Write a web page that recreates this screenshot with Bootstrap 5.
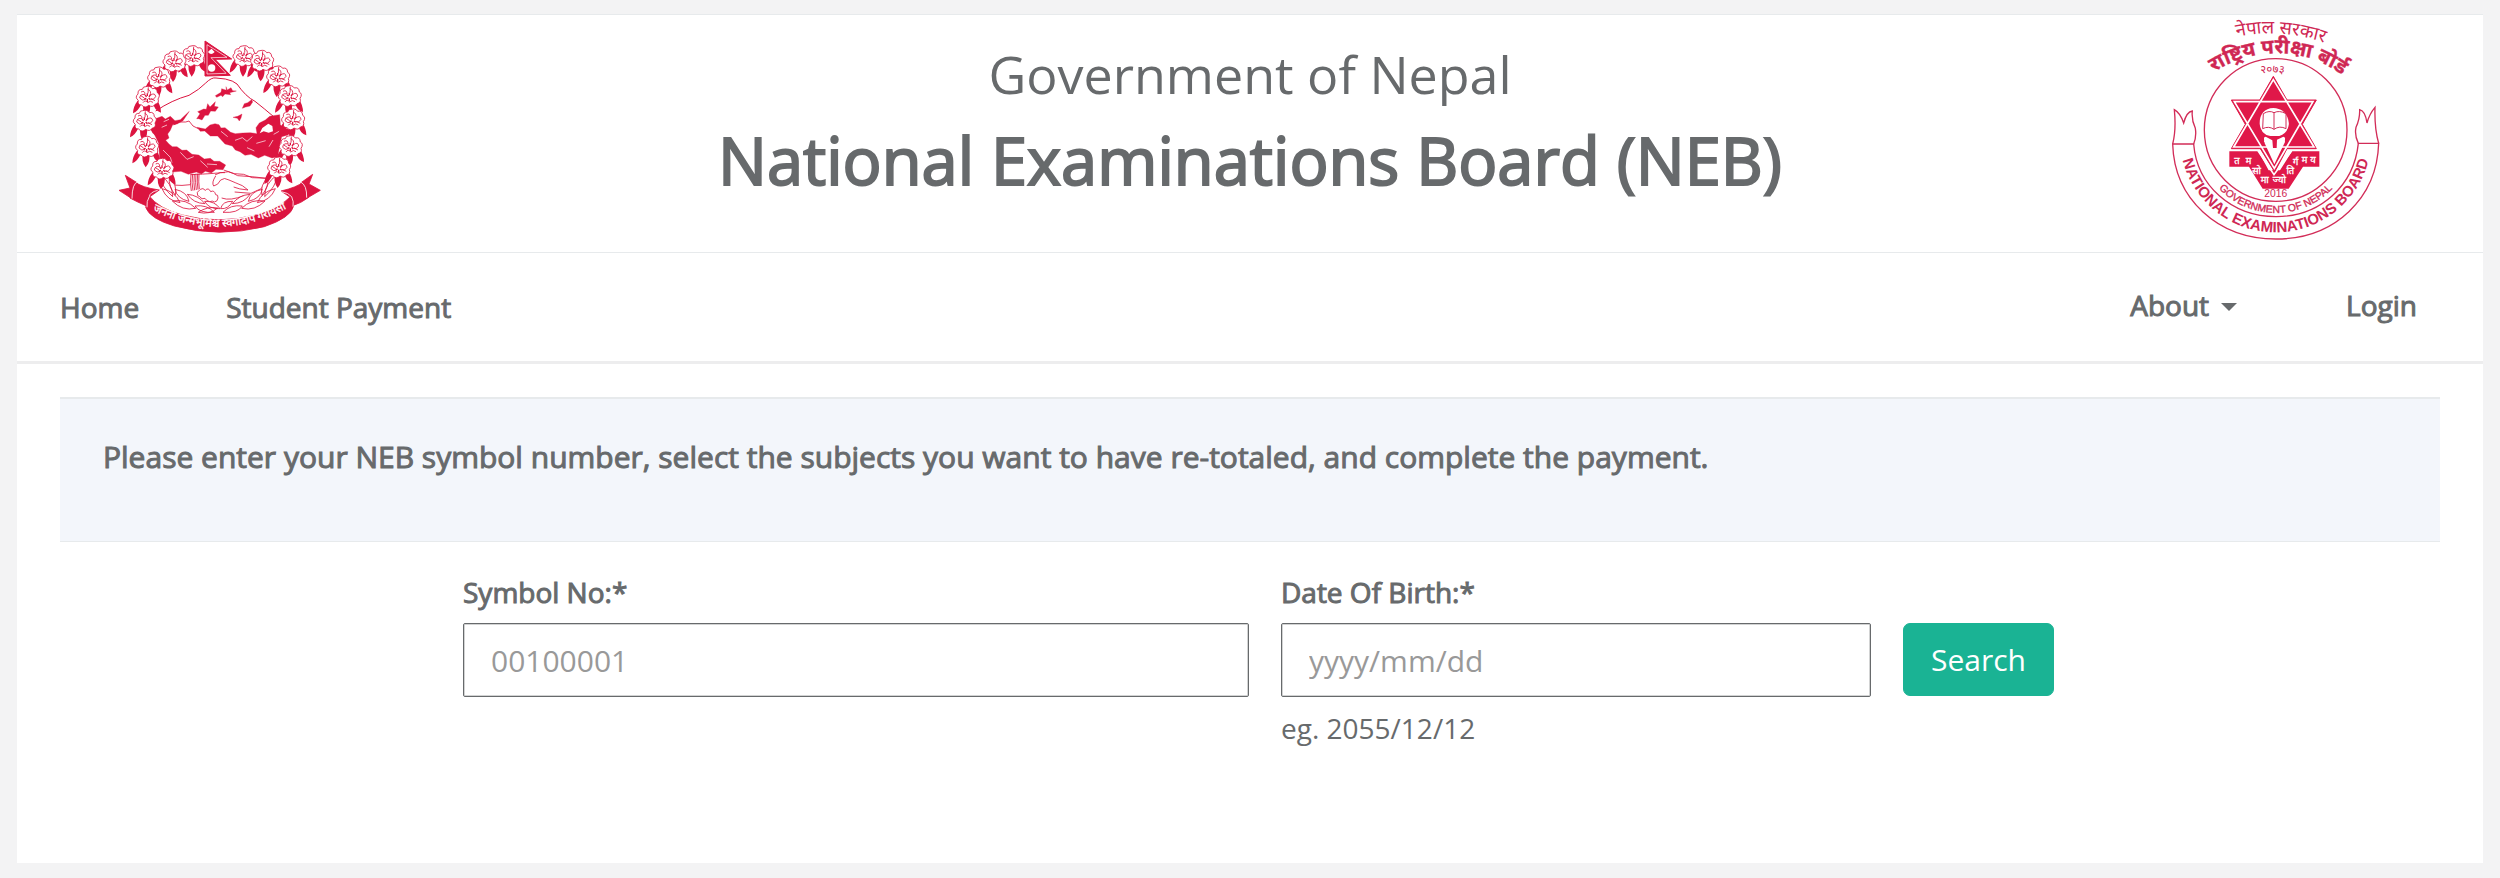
<!DOCTYPE html>
<html lang="en">
<head>
<meta charset="utf-8">
<meta name="viewport" content="width=device-width, initial-scale=1">
<title>National Examinations Board (NEB)</title>
<link href="https://cdn.jsdelivr.net/npm/bootstrap@5.3.0/dist/css/bootstrap.min.css" rel="stylesheet">
<style>
  :root { --ink: #676a6c; --rule: #e7eaec; }
  body { background: #f3f3f4; color: var(--ink); font-family: "Open Sans", sans-serif; font-size: 28px; line-height: 40px; padding: 14px 17px 15px; }
  .sheet { background: #fff; border-top: 1px solid var(--rule); }
  .masthead { border-bottom: 1px solid var(--rule); }
  .masthead svg { display: block; margin-top: -1px; }
  .crest-left { padding-left: 90px; }
  .crest-right { padding-right: 98px; }
  .titles { padding-top: 29px; }
  .gov { font-size: 52px; line-height: 60px; margin-bottom: 16px; }
  .board { font-size: 65px; line-height: 80px; font-weight: 400; -webkit-text-stroke: 2px currentColor; }
  .heavy { -webkit-text-stroke: 1px currentColor; }
  .mainnav { padding: 32px 66px 32px 43px; border-bottom: 3px solid #ededee; }
  .mainnav a { color: var(--ink); text-decoration: none; }
  .gap-left { gap: 87px; }
  .gap-right { gap: 109px; }
  .mainnav .dropdown-toggle::after { border-top-width: 8px; border-right-width: 8px; border-left-width: 8px; margin-left: 12px; vertical-align: 5px; }
  .notice { margin: 33px 43px 0; padding: 36px 43px 62px; background: #f3f6fb; border-top: 2px solid var(--rule); border-bottom: 1px solid var(--rule); font-size: 30px; line-height: 44px; }
  .lookup { display: grid; grid-template-columns: 414fr 786fr 590fr 580fr; column-gap: 32px; padding-top: 30px; }
  .lookup label { display: block; margin-bottom: 11px; }
  .lookup .form-control { height: 74px; padding: 0 27px; font-size: 30px; color: var(--ink); border: 1px solid var(--ink); border-radius: 2px; box-shadow: inset 0 0 0 1px #d2d3d3; }
  .lookup .form-control::placeholder { color: #999; }
  .hint { margin-top: 11px; }
  .btn-find { --bs-btn-bg: #1ab394; --bs-btn-color: #fff; --bs-btn-border-color: #1ab394; --bs-btn-hover-bg: #18a689; --bs-btn-hover-color: #fff; font-size: 30px; line-height: 40px; height: 73px; padding: 0 27px; margin-top: 51px; border-radius: 7px; }
  svg text { font-family: "Noto Sans Devanagari", "Lohit Devanagari", "Liberation Sans", sans-serif; }
  svg .latin { font-family: "Liberation Sans", sans-serif; }
  svg .latin-narrow { font-family: "Liberation Sans Narrow", "Liberation Sans", sans-serif; }
</style>
</head>
<body class="d-flex flex-column min-vh-100">
<div class="sheet flex-grow-1">
  <header class="masthead row g-0">
    <div class="col-2 crest-left">
      <svg width="231" height="238" viewBox="50 42 693 714" role="img" aria-label="Emblem of Nepal" fill="none" stroke="#dc1440" stroke-width="2.5" stroke-linejoin="round">
        <defs>
          <g id="bloom">
            <path fill="#dc1440" stroke="none" d="M-30 8 Q-44 26-44 46Q-28 40-18 16ZM-12 14Q-18 40-4 58Q12 40 6 14ZM16 14Q20 38 40 44Q40 24 28 6Z"/>
            <path fill="#fff" d="M-6-34Q8-38 14-28Q28-32 29-16Q40-10 31 3Q36 16 22 19Q16 30 3 22Q-8 33-18 21Q-32 21-28 7Q-40-2-29-12Q-30-27-16-26Q-14-35-6-34Z"/>
            <path d="M-20-18Q-8-24-8-10Q-22-14-24 0Q-16 10-6 4M0-26Q12-22 8-8Q22-18 24-4Q18 8 8 3M-14 14Q-8 4 0 14Q8 6 16 13M-22-8L-10 0M22 8L10 2M2-32L1-14"/>
            <path stroke-width="4" d="M-8-8L-3-4M8-10L4-3M-10 3L-4 1M8 5L3 0M-1 12V3M-1-14V-6"/>
          </g>
          <path id="motto" d="M170 622Q385 742 606 616"/>
        </defs>
        <!-- flag -->
        <path fill="#dc1440" stroke-width="3" d="M344 123L424 177L374 178L420 226L344 228Z"/>
        <path stroke="#fff" stroke-width="2" d="M350 134L410 172L362 173L407 220L350 222Z"/>
        <path fill="#fff" stroke="none" d="M353 156Q362 168 373 156L369 152L364 146L358 151Z"/>
        <circle cx="364" cy="204" r="11" fill="#fff" stroke="none"/>
        <!-- mountain -->
        <path stroke-width="3" d="M196 333Q245 300 296 286Q328 268 345 250Q364 231 377 234L405 237Q429 242 440 252Q466 290 494 304Q522 326 550 350"/>
        <g fill="#dc1440" stroke-width="1">
          <path d="M375 287L392 277L394 266L408 271L407 260L411 270L422 263L427 272L438 273L418 278L421 284L404 282L397 290L392 286L379 292Z"/>
          <path d="M319 356L329 341L322 335L340 327L348 328L352 311L359 321L375 305L372 319L384 321L375 334L361 333L354 346L344 346L335 360L325 356Z"/>
          <path d="M456 325L462 311L472 308L484 299L487 306L479 318L466 321Z"/>
          <path d="M428 352L442 349L455 342L452 354L447 363L441 355Z"/>
          <path d="M193 357L215 349L225 357L240 349L254 362L270 359L297 334L278 362L260 372L247 374L240 391L232 402L236 414L226 421L236 432L246 440L260 440L275 451L289 450L305 463L325 465L342 477L360 475L371 484L388 484L406 495L398 509L377 508L363 519L345 514L333 522L318 516L294 523L272 514L245 516L225 506L208 480L205 430L193 405Z"/>
          <path d="M320 382L345 387L359 375L374 371L386 374L392 384L404 383L421 397L435 401L457 399L480 398L500 401L497 383L507 369L525 360L538 349L568 344L570 374L576 380L604 392L593 405L574 410L569 433L562 470L545 474L523 466L504 474L482 463L464 466L449 455L435 450L426 438L404 432L382 408L360 408L343 393L330 394Z"/>
        </g>
        <path fill="#fff" stroke="none" d="M516 384L534 371L546 378L548 394L535 398L520 394L508 400Z"/>
        <path stroke="#fff" stroke-width="2" d="M220 365L236 358M214 382L230 375M270 457L290 478L310 470M330 482L352 502M380 494L350 492M434 421L456 413L470 424L486 410M498 430L526 422M536 440L548 420M470 443L492 453M550 403L568 393M218 450L240 472L245 488M392 394L412 410"/>
        <path d="M250 375L266 366L286 366L296 363L308 378L324 386M400 510L432 521L460 523L486 533L536 535"/>
        <!-- hands -->
        <path d="M300 524C350 522 394 519 414 515Q432 521 442 527Q494 530 536 536M244 555Q278 558 300 554M321 577L330 568Q338 562 345 571Q354 561 361 575Q372 569 376 584Q384 583 383 594Q382 605 372 606Q366 601 359 605Q349 604 344 595Q334 600 328 590Q319 589 321 577M376 528Q363 548 370 558Q383 556 391 540Q402 531 416 540Q437 549 456 557L473 570Q445 568 430 561M433 576L482 580Q513 570 532 548M394 594Q420 604 462 586M374 525Q390 514 404 518"/>
        <path d="M302 523Q298 549 303 573M307 522Q303 549 308 572M312 522Q309 549 313 571M317 521Q314 549 318 570M322 521Q319 547 323 569M326 521Q324 547 327 567"/>
        <!-- laurel -->
        <g fill="#fff">
          <path d="M209 524Q212 560 247 590Q247 551 209 524ZM237 532Q234 558 255 586Q262 556 237 532ZM215 566Q230 602 269 608Q254 574 215 566ZM254 568Q260 596 296 604Q290 575 254 568ZM246 603Q276 634 316 625Q288 596 246 603ZM291 583Q309 610 344 611Q323 585 291 583ZM314 618Q327 640 372 637Q350 613 314 618ZM343 604Q356 628 389 626Q374 603 343 604ZM382 624Q350 618 324 637Q358 645 382 624Z"/>
          <path d="M561 524Q558 560 523 590Q523 551 561 524ZM533 532Q536 558 515 586Q508 556 533 532ZM555 566Q540 602 501 608Q516 574 555 566ZM516 568Q510 596 474 604Q480 575 516 568ZM524 603Q494 634 454 625Q482 596 524 603ZM479 583Q461 610 426 611Q447 585 479 583ZM456 618Q443 640 398 637Q420 613 456 618ZM427 604Q414 628 391 626Q396 603 427 604Z"/>
        </g>
        <use href="#bloom" x="462" y="172"/><use href="#bloom" x="308" y="172"/>
        <use href="#bloom" x="252" y="188"/><use href="#bloom" x="515" y="186"/>
        <use href="#bloom" x="206" y="236"/><use href="#bloom" x="563" y="233"/>
        <use href="#bloom" x="172" y="294"/><use href="#bloom" x="598" y="292"/>
        <use href="#bloom" x="163" y="366"/><use href="#bloom" x="608" y="362"/>
        <use href="#bloom" x="170" y="444"/><use href="#bloom" x="601" y="442"/>
        <use href="#bloom" x="216" y="510"/><use href="#bloom" x="566" y="506"/>
        <!-- ribbon -->
        <g fill="#dc1440">
          <path d="M105 526L140 548L126 597L86 571L119 564Z"/>
          <path d="M135 546Q152 562 207 570L176 592L167 617Q140 606 119 594Z"/>
          <path d="M667 523L656 552L690 571L647 596L632 548Z"/>
          <path d="M638 546Q620 562 572 573L600 592L606 617Q632 610 655 592Z"/>
          <path d="M176 587Q205 626 276 645Q385 674 496 645Q568 624 604 587L610 618Q602 653 522 680Q385 714 252 678Q178 656 166 622Z"/>
        </g>
        <path stroke="#fff" d="M143 545Q125 550 125 596M177 590Q168 603 170 622M202 571Q178 577 177 590M573 575Q594 578 604 590Q611 605 608 620M631 546Q650 555 649 593"/>
        <text fill="#fff" stroke="#fff" stroke-width="1" font-size="33"><textPath href="#motto" startOffset="50%" text-anchor="middle">जननी जन्मभूमिश्च स्वर्गादपि गरीयसी</textPath></text>
      </svg>
    </div>
    <div class="col-8 titles text-center">
      <p class="gov">Government of Nepal</p>
      <h1 class="board mb-0">National Examinations Board (NEB)</h1>
    </div>
    <div class="col-2 crest-right d-flex justify-content-end">
      <svg class="flex-shrink-0" width="216" height="238" viewBox="87 42 648 714" role="img" aria-label="National Examinations Board seal" fill="none" stroke="#d22c58" stroke-width="4">
        <defs>
          <path id="arcTop" d="M262 118Q415 74 580 138"/>
          <path id="arcBoard" d="M190 238Q295 160 410 160Q530 158 636 248"/>
          <path id="arcYear" d="M355 222Q400 215 440 222"/>
          <path id="arcGov" d="M223 550A235 235 0 0 0 591 550"/>
          <path id="arcName" d="M119 409A288 288 0 0 0 695 409"/>
        </defs>
        <circle cx="407" cy="390" r="214"/>
        <path d="M98 432H161C171 556 274 650 408 650C542 650 642 556 655 430H716C711 594 585 717 408 717C232 717 103 596 98 432Z"/>
        <path d="M98 432Q109 390 103 329Q121 339 131 369Q140 335 157 333Q154 360 166 385Q170 410 161 432M716 430Q703 385 705 322Q688 342 681 369Q676 333 659 329Q660 357 648 382Q643 406 655 430"/>
        <!-- star -->
        <path fill="#e01849" stroke="#e01849" stroke-width="3" d="M400 229L441 300H529L487 373L529 446H441L404 516L361 446H274L316 373L274 300H359Z"/>
        <path stroke="#fff" stroke-width="5" d="M400 239L522 441H281ZM283 305H519L403 505Z"/>
        <path fill="#fff" stroke="none" d="M400 324C432 325 448 348 447 382Q433 404 435 426L403 493L372 425Q374 404 360 382C355 348 370 325 400 324Z"/>
        <path fill="#e01849" stroke="none" d="M359 372Q361 403 391 408H418Q443 401 447 372Q460 413 435 432Q441 412 430 410L411 419L410 444H399L397 421L377 410Q366 412 374 430Q345 406 359 372Z"/>
        <path fill="#fff" stroke-width="3" d="M370 341Q388 330 402 338Q418 330 438 341V386Q419 376 402 388Q386 377 368 386ZM402 338V388"/>
        <!-- banner -->
        <path fill="#e01849" stroke="none" d="M268 454H355L386 511H420L456 454H538V500H489L446 566H368L327 500H268Z"/>
        <path stroke="#fff" stroke-width="5" d="M354 452L402 524L455 452"/>
        <text fill="#fff" stroke="#fff" stroke-width="1" font-size="28" text-anchor="middle"><tspan x="291" y="493">त</tspan><tspan x="326" y="493">म</tspan><tspan x="350" y="522">सो</tspan><tspan x="374" y="549">मा</tspan><tspan x="418" y="549">ज्यो</tspan><tspan x="451" y="521">ति</tspan><tspan x="467" y="495">र्ग</tspan><tspan x="494" y="489">म</tspan><tspan x="519" y="489">य</tspan></text>
        <g fill="#cf2754" stroke-width="1">
          <text font-size="55" stroke="none"><textPath href="#arcTop" startOffset="50%" text-anchor="middle">नेपाल सरकार</textPath></text>
          <text font-size="61" font-weight="700"><textPath href="#arcBoard" startOffset="50%" text-anchor="middle">राष्ट्रिय परीक्षा बोर्ड</textPath></text>
          <text font-size="34" stroke="none"><textPath href="#arcYear" startOffset="50%" text-anchor="middle">२०७३</textPath></text>
          <text class="latin" x="407" y="591" font-size="31" stroke="none" text-anchor="middle">2016</text>
          <text class="latin-narrow" font-size="31"><textPath href="#arcGov" startOffset="50%" text-anchor="middle">GOVERNMENT OF NEPAL</textPath></text>
          <text class="latin" font-size="45" font-weight="700" stroke="none"><textPath href="#arcName" startOffset="50%" text-anchor="middle">NATIONAL EXAMINATIONS BOARD</textPath></text>
        </g>
      </svg>
    </div>
  </header>

  <nav class="mainnav d-flex justify-content-between align-items-center" aria-label="Main">
    <ul class="list-unstyled d-flex mb-0 gap-left heavy">
      <li><a href="#">Home</a></li>
      <li><a href="#">Student Payment</a></li>
    </ul>
    <ul class="list-unstyled d-flex mb-1 gap-right heavy">
      <li class="dropdown"><a href="#" class="dropdown-toggle" role="button" data-bs-toggle="dropdown" aria-expanded="false">About</a></li>
      <li><a href="#">Login</a></li>
    </ul>
  </nav>

  <main>
    <div class="notice heavy">Please enter your NEB symbol number, select the subjects you want to have re-totaled, and complete the payment.</div>
    <form class="lookup">
      <span></span>
      <div>
        <label class="heavy" for="symbol">Symbol No:*</label>
        <input class="form-control" id="symbol" type="text" placeholder="00100001">
      </div>
      <div>
        <label class="heavy" for="dob">Date Of Birth:*</label>
        <input class="form-control" id="dob" type="text" placeholder="yyyy/mm/dd" aria-describedby="dobHint">
        <div class="hint" id="dobHint">eg. 2055/12/12</div>
      </div>
      <div><button class="btn btn-find" type="submit">Search</button></div>
    </form>
  </main>
</div>
<script src="https://cdn.jsdelivr.net/npm/bootstrap@5.3.0/dist/js/bootstrap.bundle.min.js"></script>
</body>
</html>
